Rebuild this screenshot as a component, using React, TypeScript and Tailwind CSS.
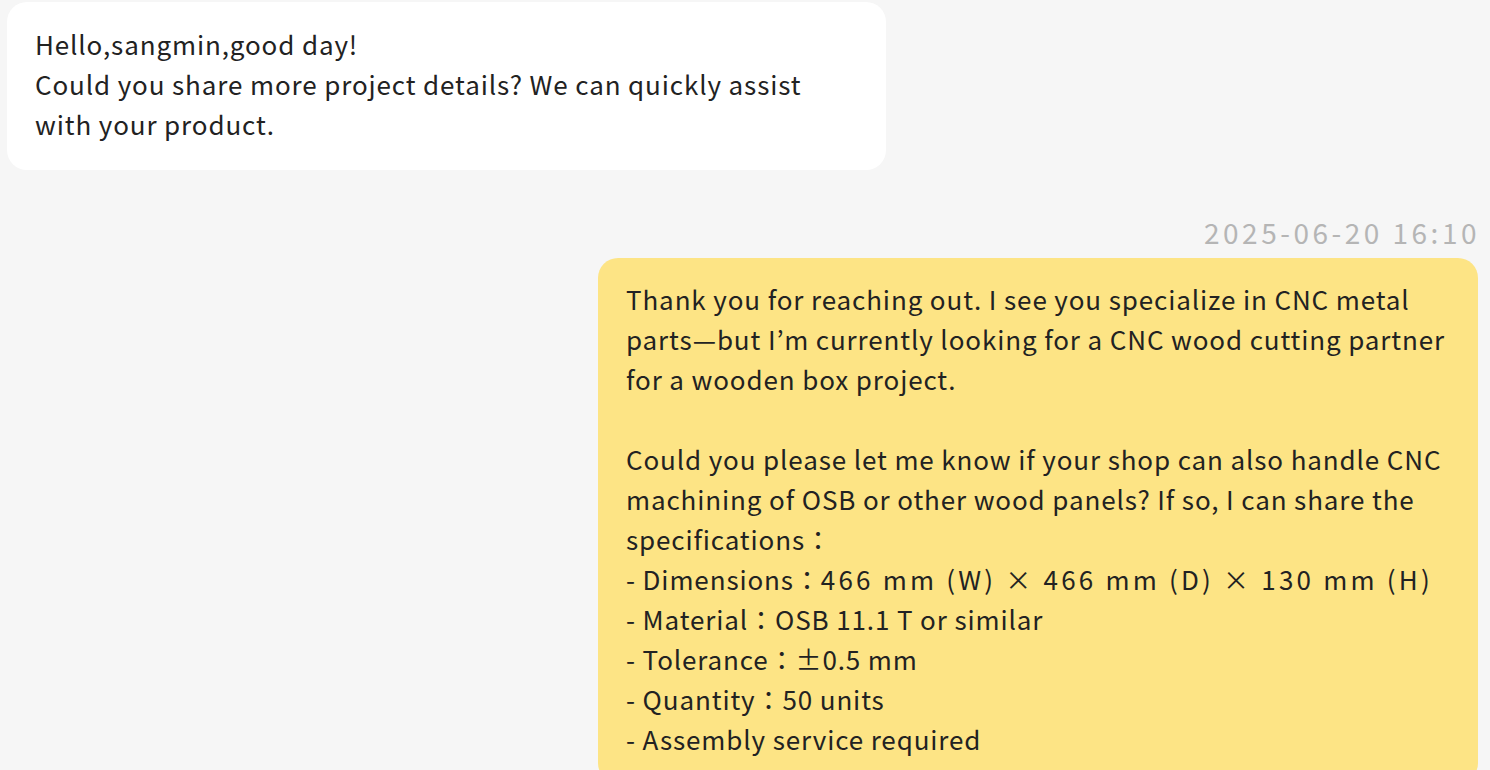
type Line = { text: string; rest?: string };

const incoming: Line[] = [
  { text: "Hello,sangmin,good day!" },
  { text: "Could you share more project details? We can quickly assist" },
  { text: "with your product." },
];

const outgoing: Line[] = [
  { text: "Thank you for reaching out. I see you specialize in CNC metal" },
  { text: "parts—but I’m currently looking for a CNC wood cutting partner" },
  { text: "for a wooden box project." },
  { text: "" },
  { text: "Could you please let me know if your shop can also handle CNC" },
  { text: "machining of OSB or other wood panels? If so, I can share the" },
  { text: "specifications：" },
  { text: "- Dimensions：", rest: "466 mm (W) × 466 mm (D) × 130 mm (H)" },
  { text: "- Material：OSB 11.1 T or similar" },
  { text: "- Tolerance：±0.5 mm" },
  { text: "- Quantity：50 units" },
  { text: "- Assembly service required" },
];

const Lines = ({ lines }: { lines: Line[] }) => (
  <>
    {lines.map((l, i) => (
      <div key={i} className="h-[40px] whitespace-pre">
        {l.text}
        {l.rest && <span className="tracking-[3.2px]">{l.rest}</span>}
      </div>
    ))}
  </>
);

export default function App() {
  return (
    <div
      className="w-[1490px] h-[770px] overflow-hidden bg-[#f6f6f6] pl-[7px] pr-[12px] pt-[2px] text-[#222222] text-[26px] leading-[40px] tracking-[0.88px]"
      style={{ fontFamily: '"Noto Sans CJK JP", "Noto Sans", sans-serif' }}
    >
      <div className="w-[879px] bg-white rounded-[20px] px-[28px] pt-[22px] pb-[26px]">
        <Lines lines={incoming} />
      </div>

      <div className="mt-[42px] flex flex-col items-end">
        <div className="text-[#b5b5b5] text-[28px] leading-[40px] tracking-[3.5px] mb-[6px] -mr-[2px]">
          2025-06-20 16:10
        </div>
        <div className="w-[880px] bg-[#fde485] rounded-[20px] px-[28px] pt-[21px] pb-[24px]">
          <Lines lines={outgoing} />
        </div>
      </div>
    </div>
  );
}
